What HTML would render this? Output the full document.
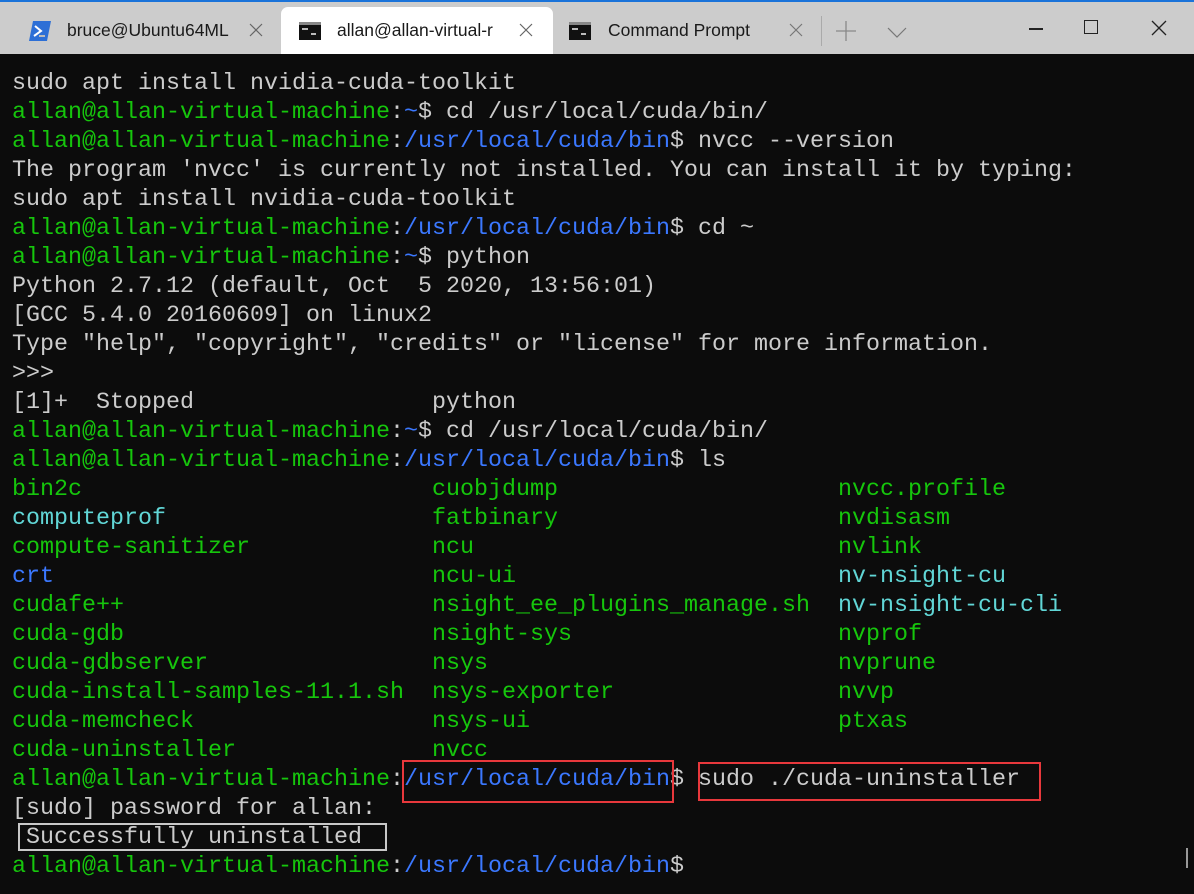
<!DOCTYPE html>
<html><head><meta charset="utf-8"><style>
*{margin:0;padding:0;box-sizing:border-box}
body{width:1194px;height:894px;background:#0c0c0c;overflow:hidden;position:relative;font-family:"Liberation Sans",sans-serif}
#top{position:absolute;left:0;top:0;width:1194px;height:2px;background:#1a73d9}
#bar{position:absolute;left:0;top:2px;width:1194px;height:52px;background:#cccccc}
.tab{position:absolute;top:5px;height:47px;font-size:17.5px;color:#1a1a1a;line-height:47px}
.act{background:#fff;border-radius:7px 7px 0 0}
.x{position:absolute;top:16px}
pre{position:absolute;left:12px;top:70px;font-family:"Liberation Mono",monospace;font-size:23.33px;line-height:29px;color:#cccccc}
.g{color:#16c60c}.b{color:#3b78ff}.c{color:#61d6d6}
.box{position:absolute;border:2px solid #e8383c}
</style></head><body>
<div id="top"></div>
<div id="bar">
 <div class="tab" style="left:29px;width:250px">
  <svg style="position:absolute;left:0;top:14px" width="22" height="20"><polygon points="4,0 22,0 18,20 0,20" fill="#2d6fd6"/><path d="M6 5 L12 10 L5 15" stroke="#fff" stroke-width="2" fill="none"/><rect x="10" y="14" width="6" height="2" fill="#bbb"/></svg>
  <span style="position:absolute;left:38px">bruce@Ubuntu64ML</span>
  <svg class="x" style="left:220px" width="14" height="14"><path d="M1 1L13 13M13 1L1 13" stroke="#666" stroke-width="1.2"/></svg>
 </div>
 <div class="tab act" style="left:281px;width:272px">
  <svg style="position:absolute;left:18px;top:15px" width="22" height="18"><rect width="22" height="18" fill="#111"/><rect x="0" y="0" width="22" height="3" fill="#888"/><rect x="3" y="6" width="6" height="2" fill="#bbb"/><rect x="12" y="11" width="5" height="2" fill="#bbb"/></svg>
  <span style="position:absolute;left:56px">allan@allan-virtual-r</span>
  <svg class="x" style="left:238px" width="14" height="14"><path d="M1 1L13 13M13 1L1 13" stroke="#666" stroke-width="1.2"/></svg>
 </div>
 <div class="tab" style="left:569px;width:240px">
  <svg style="position:absolute;left:0;top:15px" width="22" height="18"><rect width="22" height="18" fill="#111"/><rect x="0" y="0" width="22" height="3" fill="#888"/><rect x="3" y="6" width="6" height="2" fill="#bbb"/><rect x="12" y="11" width="5" height="2" fill="#bbb"/></svg>
  <span style="position:absolute;left:39px">Command Prompt</span>
  <svg class="x" style="left:220px" width="14" height="14"><path d="M1 1L13 13M13 1L1 13" stroke="#777" stroke-width="1.2"/></svg>
 </div>
 <div style="position:absolute;left:821px;top:14px;width:1px;height:30px;background:#aaa"></div>
 <svg style="position:absolute;left:836px;top:19px" width="20" height="20"><path d="M10 0V20M0 10H20" stroke="#888" stroke-width="1.3"/></svg>
 <svg style="position:absolute;left:887px;top:25px" width="20" height="12"><path d="M1 1L10 10L19 1" stroke="#777" stroke-width="1.2" fill="none"/></svg>
 <div style="position:absolute;left:1029px;top:26px;width:14px;height:1.5px;background:#222"></div>
 <div style="position:absolute;left:1084px;top:18px;width:14px;height:14px;border:1.3px solid #222"></div>
 <svg style="position:absolute;left:1151px;top:18px" width="16" height="16"><path d="M1 1L15 15M15 1L1 15" stroke="#222" stroke-width="1.3"/></svg>
</div>
<pre>sudo apt install nvidia-cuda-toolkit
<span class="g">allan@allan-virtual-machine</span>:<span class="b">~</span>$ cd /usr/local/cuda/bin/
<span class="g">allan@allan-virtual-machine</span>:<span class="b">/usr/local/cuda/bin</span>$ nvcc --version
The program 'nvcc' is currently not installed. You can install it by typing:
sudo apt install nvidia-cuda-toolkit
<span class="g">allan@allan-virtual-machine</span>:<span class="b">/usr/local/cuda/bin</span>$ cd ~
<span class="g">allan@allan-virtual-machine</span>:<span class="b">~</span>$ python
Python 2.7.12 (default, Oct  5 2020, 13:56:01)
[GCC 5.4.0 20160609] on linux2
Type "help", "copyright", "credits" or "license" for more information.
&gt;&gt;&gt;
[1]+  Stopped                 python
<span class="g">allan@allan-virtual-machine</span>:<span class="b">~</span>$ cd /usr/local/cuda/bin/
<span class="g">allan@allan-virtual-machine</span>:<span class="b">/usr/local/cuda/bin</span>$ ls
<span class="g">bin2c</span>                         <span class="g">cuobjdump</span>                    <span class="g">nvcc.profile</span>
<span class="c">computeprof</span>                   <span class="g">fatbinary</span>                    <span class="g">nvdisasm</span>
<span class="g">compute-sanitizer</span>             <span class="g">ncu</span>                          <span class="g">nvlink</span>
<span class="b">crt</span>                           <span class="g">ncu-ui</span>                       <span class="c">nv-nsight-cu</span>
<span class="g">cudafe++</span>                      <span class="g">nsight_ee_plugins_manage.sh</span>  <span class="c">nv-nsight-cu-cli</span>
<span class="g">cuda-gdb</span>                      <span class="g">nsight-sys</span>                   <span class="g">nvprof</span>
<span class="g">cuda-gdbserver</span>                <span class="g">nsys</span>                         <span class="g">nvprune</span>
<span class="g">cuda-install-samples-11.1.sh</span>  <span class="g">nsys-exporter</span>                <span class="g">nvvp</span>
<span class="g">cuda-memcheck</span>                 <span class="g">nsys-ui</span>                      <span class="g">ptxas</span>
<span class="g">cuda-uninstaller</span>              <span class="g">nvcc</span>
<span class="g">allan@allan-virtual-machine</span>:<span class="b">/usr/local/cuda/bin</span>$ sudo ./cuda-uninstaller
[sudo] password for allan:
 Successfully uninstalled
<span class="g">allan@allan-virtual-machine</span>:<span class="b">/usr/local/cuda/bin</span>$</pre>
<div class="box" style="left:402px;top:760px;width:272px;height:43px"></div>
<div class="box" style="left:698px;top:762px;width:343px;height:39px"></div>
<div style="position:absolute;left:18px;top:823px;width:369px;height:28px;border:2px solid #c8c8c8"></div>
<div style="position:absolute;left:1186px;top:848px;width:2px;height:20px;background:#999"></div>
</body></html>
